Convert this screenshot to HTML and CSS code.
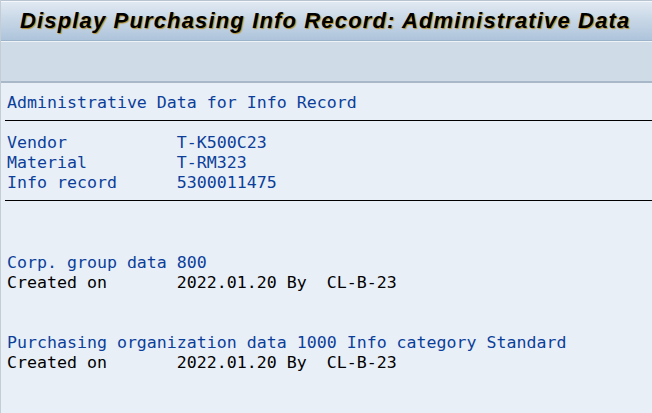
FILE: index.html
```html
<!DOCTYPE html>
<html>
<head>
<meta charset="utf-8">
<link rel="stylesheet" href="styles.css">
</head>
<body>
<div class="window">
  <header class="titlebar">
    <h1 class="title">Display Purchasing Info Record: Administrative Data</h1>
  </header>
  <div class="toolbar"></div>
  <main class="content">
    <div class="row blue">Administrative Data for Info Record</div>
    <div class="sep"></div>
    <div class="row blue">Vendor           T-K500C23</div>
    <div class="row blue">Material         T-RM323</div>
    <div class="row blue">Info record      5300011475</div>
    <div class="sep"></div>
    <div class="row"> </div>
    <div class="row"> </div>
    <div class="row blue">Corp. group data 800</div>
    <div class="row">Created on       2022.01.20 By  CL-B-23</div>
    <div class="row"> </div>
    <div class="row"> </div>
    <div class="row blue">Purchasing organization data 1000 Info category Standard</div>
    <div class="row">Created on       2022.01.20 By  CL-B-23</div>
  </main>
</div>
</body>
</html>
```

FILE: styles.css
```css
html, body {
  margin: 0;
  padding: 0;
  background: #e8eff7;
}
.window {
  width: 652px;
  height: 413px;
  overflow: hidden;
  box-sizing: border-box;
  border-left: 1px solid #c4ccd6;
  background: #e8eff7;
  display: flex;
  flex-direction: column;
}
.titlebar {
  flex: none;
  height: 41px;
  box-sizing: border-box;
  border-top: 1px solid #b8c4d0;
  box-shadow: inset 0 1px 0 #f4f8fc;
  background: linear-gradient(to bottom, #e2eaf3 0%, #c9d8e7 45%, #aec4db 100%);
  border-bottom: 1px solid #9db3c9;
  display: flex;
  align-items: center;
  padding-left: 19px;
}
.title {
  margin: 0;
  font-family: "Liberation Sans", Arial, sans-serif;
  font-size: 22px;
  font-weight: bold;
  font-style: italic;
  color: #000;
  letter-spacing: 1.15px;
  text-shadow: 1px 1px 1px #b8902e;
  white-space: nowrap;
}
.toolbar {
  flex: none;
  height: 42px;
  box-sizing: border-box;
  border-top: 1px solid #eef3f8;
  background: #cfdce7;
  border-bottom: 2px solid #a8b8c8;
}
.content {
  padding: 10px 0 0 6px;
  font-family: "DejaVu Sans Mono", "Liberation Mono", monospace;
  font-size: 16.6px;
  line-height: 20px;
  color: #000;
}
.row {
  height: 20px;
  white-space: pre;
}
.blue {
  color: #0c3f9a;
}
.sep {
  height: 20px;
  box-sizing: border-box;
  margin-left: -2px;
  padding-top: 7px;
}
.sep::before {
  content: "";
  display: block;
  height: 1px;
  background: #000;
}
```
